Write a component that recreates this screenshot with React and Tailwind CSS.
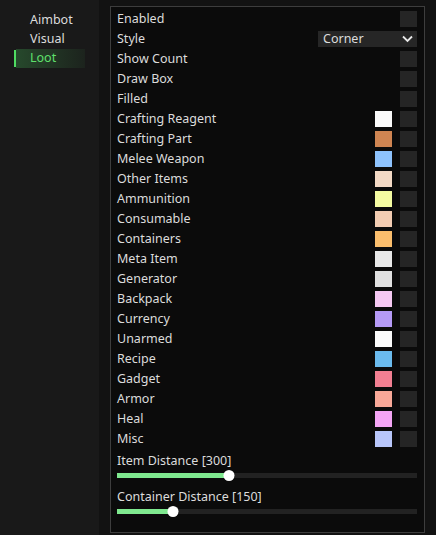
import React from 'react';

const rows = [
  { label: 'Enabled' },
  { label: 'Style', dropdown: 'Corner' },
  { label: 'Show Count' },
  { label: 'Draw Box' },
  { label: 'Filled' },
  { label: 'Crafting Reagent', color: '#fafafa' },
  { label: 'Crafting Part', color: '#cf8552' },
  { label: 'Melee Weapon', color: '#8ec3fd' },
  { label: 'Other Items', color: '#f3d9c5' },
  { label: 'Ammunition', color: '#f4fba1' },
  { label: 'Consumable', color: '#f2ccb2' },
  { label: 'Containers', color: '#fbbe6d' },
  { label: 'Meta Item', color: '#e8e8e8' },
  { label: 'Generator', color: '#e0e0e0' },
  { label: 'Backpack', color: '#f5c8f2' },
  { label: 'Currency', color: '#b59af6' },
  { label: 'Unarmed', color: '#fbfbfb' },
  { label: 'Recipe', color: '#6bbbee' },
  { label: 'Gadget', color: '#f27f92' },
  { label: 'Armor', color: '#f8a898' },
  { label: 'Heal', color: '#f4a5f5' },
  { label: 'Misc', color: '#b8c6fa' },
];

const Checkbox = () => (
  <div className="w-[17px] h-[16px] bg-[#252525]" />
);

const Slider = ({ label, pct }) => (
  <div className="flex flex-col">
    <div className="h-[18px] flex items-center leading-none">{label}</div>
    <div className="relative h-[10px] flex items-center">
      <div className="w-full h-[5px] bg-[#222222]">
        <div className="h-full bg-[#7fe88f]" style={{ width: `${pct}%` }} />
      </div>
      <div
        className="absolute w-[11px] h-[11px] rounded-full bg-white -translate-x-1/2"
        style={{ left: `${pct}%` }}
      />
    </div>
  </div>
);

export default function App() {
  return (
    <div
      className="w-[436px] h-[535px] flex bg-[#121212] text-[#dcdcdc] text-[12.5px] overflow-hidden"
      style={{ fontFamily: '"Noto Sans", "Open Sans", sans-serif' }}
    >
      {/* Sidebar */}
      <div className="w-[99px] h-full bg-[#191919] pt-[11px] flex flex-col">
        <div className="h-[19px] flex items-center pl-[30px]">Aimbot</div>
        <div className="h-[19px] flex items-center pl-[30px]">Visual</div>
        <div className="h-[19px] ml-[14px] mr-[14px] flex items-center">
          <div className="w-[2px] h-[17px] bg-[#4fdc62]" />
          <div className="flex-1 h-full flex items-center pl-[14px] text-[#5fe06c] bg-gradient-to-r from-[#26492c] to-[#1c231d]">
            Loot
          </div>
        </div>
      </div>

      {/* Panel */}
      <div className="ml-[11px] mt-[6px] w-[315px] h-[527px] border border-[#3d3d3d] bg-[#0b0b0b] pt-[2px] pl-[6px] pr-[7px]">
        {rows.map((r) => (
          <div key={r.label} className="h-[20px] flex items-center">
            <span className="flex-1 leading-none">{r.label}</span>
            {r.dropdown ? (
              <div className="w-[99px] h-[16px] bg-[#262626] flex items-center justify-between pl-[5px] pr-[4px] leading-none">
                <span>{r.dropdown}</span>
                <svg width="11" height="8" viewBox="0 0 11 8">
                  <path d="M1 1.5 L5.5 6 L10 1.5" stroke="#e8e8e8" strokeWidth="1.8" fill="none" />
                </svg>
              </div>
            ) : (
              <div className="flex items-center gap-[8px]">
                {r.color && (
                  <div className="w-[17px] h-[16px]" style={{ backgroundColor: r.color }} />
                )}
                <Checkbox />
              </div>
            )}
          </div>
        ))}
        <div className="mt-[3px] flex flex-col gap-[8px]">
          <Slider label="Item Distance [300]" pct={37.3} />
          <Slider label="Container Distance [150]" pct={18.7} />
        </div>
      </div>
    </div>
  );
}
